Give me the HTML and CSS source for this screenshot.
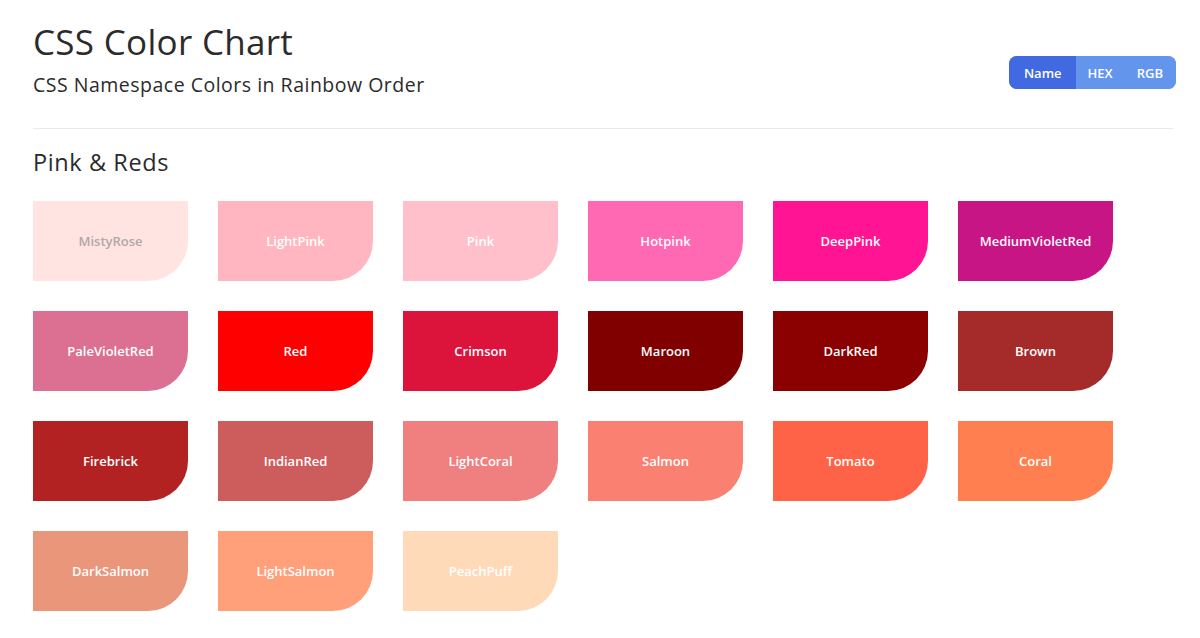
FILE: index.html
```html
<!DOCTYPE html>
<html lang="en">
<head>
<meta charset="utf-8">
<title>CSS Color Chart</title>
<link rel="stylesheet" href="styles.css">
</head>
<body>
<div class="page">
  <header class="header">
    <div class="titles">
      <h1 class="title">CSS Color Chart</h1>
      <p class="subtitle">CSS Namespace Colors in Rainbow Order</p>
    </div>
    <div class="toggle">
      <button class="toggle-btn active">Name</button>
      <button class="toggle-btn">HEX</button>
      <button class="toggle-btn">RGB</button>
    </div>
  </header>
  <hr class="rule">
  <section class="group">
    <h2 class="group-title">Pink &amp; Reds</h2>
    <div class="grid">
      <div class="swatch dark-text" style="background:mistyrose">MistyRose</div>
      <div class="swatch" style="background:lightpink">LightPink</div>
      <div class="swatch" style="background:pink">Pink</div>
      <div class="swatch" style="background:hotpink">Hotpink</div>
      <div class="swatch" style="background:deeppink">DeepPink</div>
      <div class="swatch" style="background:mediumvioletred">MediumVioletRed</div>
      <div class="swatch" style="background:palevioletred">PaleVioletRed</div>
      <div class="swatch" style="background:red">Red</div>
      <div class="swatch" style="background:crimson">Crimson</div>
      <div class="swatch" style="background:maroon">Maroon</div>
      <div class="swatch" style="background:darkred">DarkRed</div>
      <div class="swatch" style="background:brown">Brown</div>
      <div class="swatch" style="background:firebrick">Firebrick</div>
      <div class="swatch" style="background:indianred">IndianRed</div>
      <div class="swatch" style="background:lightcoral">LightCoral</div>
      <div class="swatch" style="background:salmon">Salmon</div>
      <div class="swatch" style="background:tomato">Tomato</div>
      <div class="swatch" style="background:coral">Coral</div>
      <div class="swatch" style="background:darksalmon">DarkSalmon</div>
      <div class="swatch" style="background:lightsalmon">LightSalmon</div>
      <div class="swatch" style="background:peachpuff">PeachPuff</div>
    </div>
  </section>
</div>
</body>
</html>
```

FILE: styles.css
```css
* { box-sizing: border-box; }
html, body { margin: 0; padding: 0; background: #fff; }
body {
  font-family: "Open Sans", "Noto Sans", Arial, sans-serif;
  color: #333;
}
.page {
  width: 1140px;
  margin-left: 33px;
  padding-top: 20px;
}
.header {
  display: flex;
  justify-content: space-between;
  align-items: flex-start;
}
.title {
  margin: 0;
  font-size: 35px;
  font-weight: 400;
  line-height: 44px;
  letter-spacing: 0.3px;
  color: #2b2b2b;
}
.subtitle {
  margin: 8px 0 0;
  font-size: 19.5px;
  line-height: 26px;
  font-weight: 400;
  letter-spacing: 0.5px;
  color: #2b2b2b;
}
.toggle {
  display: flex;
  margin-top: 36px;
  margin-right: -3px;
  border-radius: 8px;
  overflow: hidden;
  background: #6495ed;
}
.toggle-btn {
  border: 0;
  margin: 0;
  height: 33px;
  padding: 0 12px;
  background: #6495ed;
  color: #fff;
  font-family: "Open Sans", Arial, sans-serif;
  font-size: 13px;
  font-weight: 600;
  cursor: pointer;
}
.toggle-btn:last-child { padding-right: 13px; }
.toggle-btn.active { background: #4169e1; padding: 0 14px 0 15px; }
.rule {
  margin: 30px 0 0;
  border: 0;
  border-top: 1px solid #eaeaea;
}
.group-title {
  margin: 18px 0 0;
  font-size: 23.5px;
  line-height: 30px;
  font-weight: 400;
  letter-spacing: 0.6px;
  color: #2b2b2b;
}
.grid {
  display: grid;
  grid-template-columns: repeat(6, 155px);
  column-gap: 30px;
  row-gap: 30px;
  margin-top: 24px;
}
.swatch {
  height: 80px;
  border-bottom-right-radius: 40px;
  display: flex;
  align-items: center;
  justify-content: center;
  color: #fff;
  font-size: 13px;
  font-weight: 600;
}
.swatch.dark-text { color: #b0a8a8; }
```
